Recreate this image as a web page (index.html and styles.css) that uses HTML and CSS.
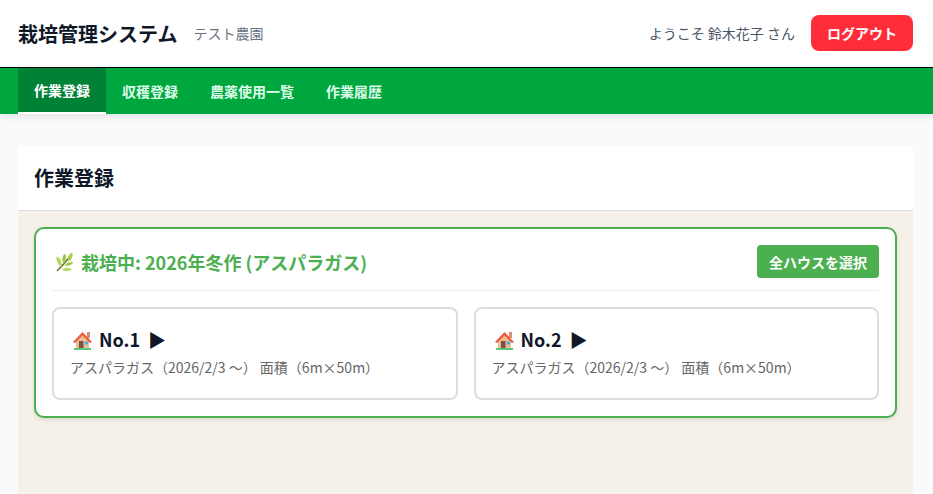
FILE: index.html
```html
<!DOCTYPE html>
<html lang="ja">
<head>
    <meta charset="UTF-8">
    <meta name="viewport" content="width=device-width, initial-scale=1.0">
    <title>栽培管理システム</title>
    <link rel="stylesheet" href="styles.css">
</head>
<body>
    <svg class="defs" width="0" height="0">
        <symbol id="house" viewBox="5 -1 20 24">
            <rect x="19" y="4" width="3" height="6" fill="#d98f6a"/>
            <path d="M8 12 L14.5 6 L21 12 V20.5 H8 Z" fill="#ecbd94"/>
            <rect x="11" y="13" width="4.5" height="7.5" fill="#7d5443"/>
            <rect x="17" y="13.5" width="3" height="3" fill="#45aee8"/>
            <path d="M5 14 L14.5 4 L24 14 L22 15 L14.5 7.5 L7 15 Z" fill="#ef5b3d"/>
            <rect x="6" y="20" width="17" height="2" fill="#57c77a"/>
        </symbol>
        <symbol id="herb" viewBox="5 3 18 20">
            <path d="M7 22 C11 18 16 13 20 7" fill="none" stroke="#6e6a34" stroke-width="1.4"/>
            <path d="M22 3.5 C23.5 7 22 10.5 18.500 12.500 C17 9 18.500 5.500 22 3.5 Z" fill="#a5d04e"/>
            <path d="M15 4.500 C17 8 16 12 13.500 15 C11.500 11.500 12 7 15 4.500 Z" fill="#9ccb48"/>
            <path d="M6.500 7.500 C10.500 8.500 12 12.500 11.500 18 C8 16 6 12 6.500 7.500 Z" fill="#b2da62"/>
            <path d="M23.500 13 C21.500 16.500 18 17.500 14.500 16.500 C16.500 13.500 20 12.500 23.500 13 Z" fill="#9ccb48"/>
            <path d="M22 20.500 C18.500 23 15 22.500 12 20.500 C15 18 19 18 22 20.500 Z" fill="#b2da62"/>
        </symbol>
    </svg>

    <header class="header">
        <div class="brand">
            <h1 class="brand-title">栽培管理システム</h1>
            <span class="brand-farm">テスト農園</span>
        </div>
        <div class="user">
            <span class="user-name">ようこそ 鈴木花子 さん</span>
            <button class="logout">ログアウト</button>
        </div>
    </header>

    <nav class="nav">
        <a class="nav-item active">作業登録</a>
        <a class="nav-item">収穫登録</a>
        <a class="nav-item">農薬使用一覧</a>
        <a class="nav-item">作業履歴</a>
    </nav>

    <main class="main">
        <div class="page-head">
            <h2 class="page-title">作業登録</h2>
        </div>
        <div class="page-body">
            <section class="crop">
                <div class="crop-head">
                    <h3 class="crop-title"><svg class="crop-icon"><use href="#herb"/></svg>栽培中: 2026年冬作 (アスパラガス)</h3>
                    <button class="select-all">全ハウスを選択</button>
                </div>
                <div class="houses">
                    <div class="house">
                        <div class="house-name"><svg class="house-icon"><use href="#house"/></svg>No.1<span class="arrow">▶</span></div>
                        <div class="house-info">アスパラガス（2026/2/3 ～） 面積（6m×50m）</div>
                    </div>
                    <div class="house">
                        <div class="house-name"><svg class="house-icon"><use href="#house"/></svg>No.2<span class="arrow">▶</span></div>
                        <div class="house-info">アスパラガス（2026/2/3 ～） 面積（6m×50m）</div>
                    </div>
                </div>
            </section>
        </div>
    </main>
</body>
</html>
```

FILE: styles.css
```css
* {
    box-sizing: border-box;
}

body {
    margin: 0;
    height: 494px;
    overflow: hidden;
    background: #f9fafb;
    font-family: "Noto Sans CJK JP", "Noto Sans", sans-serif;
    color: #101828;
}

.defs {
    display: block;
    height: 0;
}

.header {
    height: 68px;
    padding: 0 20px 1px 18px;
    display: flex;
    align-items: center;
    justify-content: space-between;
    background: #fff;
    border-bottom: 1px solid #000;
}

.brand {
    display: flex;
    align-items: center;
    gap: 16px;
}

.brand-title {
    margin: 0;
    font-size: 20px;
    font-weight: 700;
}

.brand-farm {
    font-size: 14px;
    color: #6a7282;
}

.user {
    display: flex;
    align-items: center;
    gap: 16px;
}

.user-name {
    font-size: 14px;
    color: #4a5565;
}

.logout {
    width: 102px;
    height: 36px;
    border: none;
    border-radius: 8px;
    background: #ff2d3a;
    color: #fff;
    font-family: inherit;
    font-size: 14px;
    font-weight: 700;
}

.nav {
    height: 46px;
    padding: 0 18px;
    display: flex;
    background: #00a63e;
    box-shadow: 0 2px 8px rgba(0, 0, 0, 0.1);
}

.nav-item {
    padding: 0 16px;
    display: flex;
    align-items: center;
    font-size: 14px;
    font-weight: 700;
    color: #dcfce7;
}

.nav-item.active {
    background: #008236;
    color: #fff;
    border-bottom: 2px solid #fff;
}

.main {
    margin: 32px 20px 0 18px;
}

.page-head {
    height: 65px;
    padding: 0 16px 2px;
    display: flex;
    align-items: center;
    background: #fff;
    border-bottom: 1px solid #ddd;
}

.page-title {
    margin: 0;
    font-size: 20px;
    font-weight: 700;
}

.page-body {
    height: 300px;
    padding: 16px;
    background: #f5f0e8;
}

.crop {
    padding: 16px;
    background: #fff;
    border: 2px solid #4caf50;
    border-radius: 10px;
    box-shadow: 0 2px 4px rgba(0, 0, 0, 0.1);
}

.crop-head {
    padding-bottom: 12px;
    margin-bottom: 16px;
    display: flex;
    align-items: center;
    justify-content: space-between;
    border-bottom: 1px solid #eee;
}

.crop-title {
    margin: 0;
    display: flex;
    align-items: center;
    font-size: 18px;
    font-weight: 700;
    color: #4caf50;
}

.crop-icon {
    width: 18px;
    height: 20px;
    margin: 0 8px 0 3px;
}

.select-all {
    height: 33px;
    padding: 0 12px;
    border: none;
    border-radius: 4px;
    background: #4caf50;
    color: #fff;
    font-family: inherit;
    font-size: 14px;
    font-weight: 700;
}

.houses {
    display: grid;
    grid-template-columns: 1fr 1fr;
    gap: 16px;
}

.house {
    height: 93px;
    padding: 15px 16px;
    border: 2px solid #ddd;
    border-radius: 8px;
    background: #fff;
}

.house-name {
    display: flex;
    align-items: center;
    font-size: 18px;
    font-weight: 700;
    line-height: 30px;
    margin-bottom: 3px;
}

.house-icon {
    width: 20px;
    height: 24px;
    margin: 0 6px 0 3px;
}

.arrow {
    margin-left: 8px;
}

.house-info {
    font-size: 14px;
    line-height: 20px;
    color: #666;
}
```
